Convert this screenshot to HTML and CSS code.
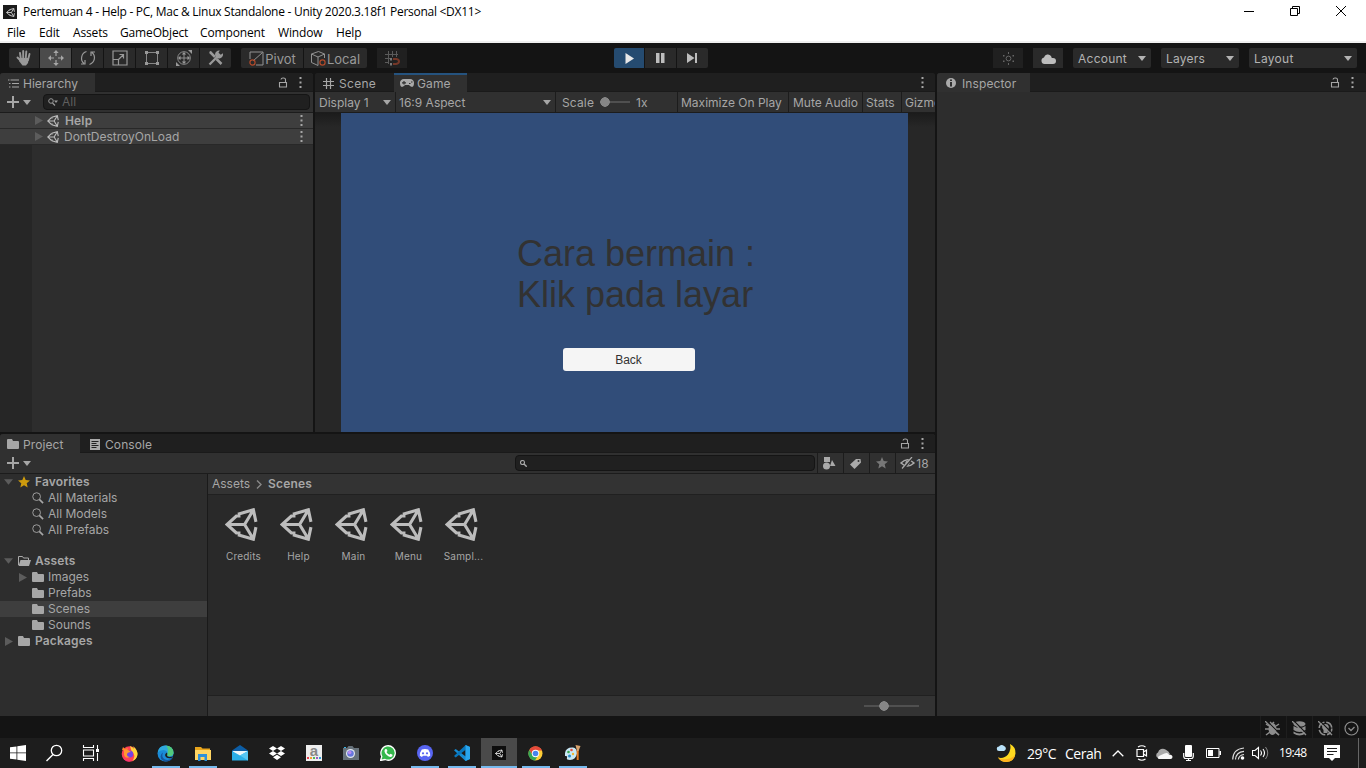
FILE: index.html
```html
<!DOCTYPE html>
<html lang="en">
<head>
<meta charset="utf-8">
<title>Pertemuan 4 - Help - Unity</title>
<link rel="stylesheet" href="styles.css">
</head>
<body>
<svg class="defs" width="0" height="0">
  <symbol id="unity" viewBox="0 0 32 32"><path d="M15 7.800H11L2 16 11 24.200h4M12.500 6L27.500 1.700 30 13.500M12.500 26l15 4.300L30 18.500M2 16h17M27.500 2L19 16l8.500 14" fill="none" stroke="currentColor" stroke-width="3"/></symbol>
  <symbol id="lock" viewBox="0 0 10 11"><path d="M1.500 5.500h7v4.500h-7zM7.500 5V2.5Q7.500 1 5.500 1H5Q3.200 1 3 2.500" fill="none" stroke="currentColor" stroke-width="1.1"/></symbol>
  <symbol id="dots" viewBox="0 0 3 11"><path d="M.5 0h2v2h-2zM.5 4.500h2v2h-2zM.5 9h2v2h-2z" fill="currentColor"/></symbol>
  <symbol id="down" viewBox="0 0 8 5"><path d="M0 0h8L4 5z" fill="currentColor"/></symbol>
  <symbol id="right" viewBox="0 0 8 9"><path d="M0 0v9l8-4.500z" fill="currentColor"/></symbol>
  <symbol id="folder" viewBox="0 0 12 10"><path d="M0 1Q0 0 1 0h4l1 2h5q1 0 1 1v6q0 1-1 1H1q-1 0-1-1z" fill="currentColor"/></symbol>
  <symbol id="search" viewBox="0 0 13 13"><circle cx="5" cy="5" r="4.200" fill="none" stroke="currentColor"/><path d="M8 8l4 4" stroke="currentColor" stroke-width="1.800"/></symbol>
  <symbol id="star" viewBox="0 0 12 12"><path d="M6 0l1.700 4.100 4.300.3-3.300 2.900 1 4.300L6 9.300l-3.700 2.300 1-4.300L0 4.400l4.300-.3z" fill="currentColor"/></symbol>
  <symbol id="plus" viewBox="0 0 12 12"><path d="M6 0v12M0 6h12" stroke="currentColor" stroke-width="2"/></symbol>
</svg>

<header class="titlebar">
  <span class="app-icon"><svg width="9" height="9"><use href="#unity"/></svg></span>
  <span class="title">Pertemuan 4 - Help - PC, Mac &amp; Linux Standalone - Unity 2020.3.18f1 Personal &lt;DX11&gt;</span>
  <div class="window-controls">
    <svg width="10" height="12" viewBox="0 0 10 12"><path d="M0 6.500h10" stroke="#000"/></svg>
    <svg width="10" height="10" viewBox="0 0 10 10"><path d="M.5 2.500h7v7h-7zM2.500 2V.500h7v7H8" fill="none" stroke="#000"/></svg>
    <svg width="10" height="10" viewBox="0 0 10 10"><path d="M0 0l10 10M10 0L0 10" stroke="#000"/></svg>
  </div>
</header>
<nav class="menubar"><span class="m-file">File</span><span class="m-edit">Edit</span><span class="m-assets">Assets</span><span class="m-go">GameObject</span><span class="m-comp">Component</span><span class="m-win">Window</span><span>Help</span></nav>

<div class="toolbar">
  <div class="group tools">
    <button><svg width="16" height="16" viewBox="0 0 16 16"><path d="M5 10L4 3M7.200 9V1M9.700 9l.6-7.500M12 10l1.500-6M5 11L1.500 7.500" stroke="#999" stroke-width="1.900" stroke-linecap="round"/><path d="M4 8h9l-1 5-2 2.500H6.500L3 11z" fill="#999"/></svg></button>
    <button class="selected"><svg width="16" height="16" viewBox="0 0 16 16"><path d="M8 1.500V6M8 10v4.500M1.500 8H6M10 8h4.500" stroke="#a6a6a6" stroke-width="1.200"/><path d="M8 0l2.700 3H5.300zM8 16l2.700-3H5.300zM0 8l3-2.700v5.400zM16 8l-3-2.700v5.400z" fill="#a6a6a6"/></svg></button>
    <button><svg width="16" height="16" viewBox="0 0 16 16"><path d="M6.500 1.500A7 7 0 0 0 4 13.500M1 14h4v-4M9.500 14.500A7 7 0 0 0 12 2.500M15 2h-4v4" fill="none" stroke="#999" stroke-width="1.200"/></svg></button>
    <button><svg width="16" height="16" viewBox="0 0 16 16"><path d="M1 1h14v14H1zM1.500 9.500h5v5M6 10l5.500-5.500M7.500 4.500h4v4" fill="none" stroke="#999" stroke-width="1.200"/></svg></button>
    <button><svg width="16" height="16" viewBox="0 0 16 16"><path d="M4 2.500h8M4 13.500h8M2.500 4v8M13.500 4v8" stroke="#888"/><path d="M1 1h3v3H1zM12 1h3v3h-3zM1 12h3v3H1zM12 12h3v3h-3z" fill="#999"/></svg></button>
    <button><svg width="16" height="16" viewBox="0 0 16 16"><g fill="none" stroke="#8d8d8d"><circle cx="8" cy="8" r="6.300"/><path d="M8 3v10M3 8h10"/></g><path d="M8 2l2.200 2.500H5.800zM8 14l2.200-2.500H5.800zM2 8l2.500-2.200v4.400zM14 8l-2.500-2.200v4.400zM12 0h4v4zM0 12v4h4z" fill="#999"/></svg></button>
    <button><svg width="16" height="16" viewBox="0 0 16 16"><path d="M2 2l5 5M8.500 9l5 5" stroke="#999" stroke-width="2.500"/><path d="M1.500 14.500l8-8" stroke="#999" stroke-width="2.300"/><path d="M14.800 3.200a4 4 0 1 1-3-2.600L10.500 2.800l2.300 2z" fill="#999"/><path d="M1 2l2-1 1 3zM1 13l2.500 2" fill="#999"/></svg></button>
  </div>
  <div class="group handles">
    <button class="wide"><svg width="15" height="15" viewBox="0 0 15 15"><path d="M1 8V1h13v13H7M4 10L13.500 1.500" fill="none" stroke="#929292"/><circle cx="3.500" cy="11.500" r="2.600" fill="none" stroke="#b34a2a" stroke-width="1.200"/></svg><span class="t-pivot">Pivot</span></button>
    <button class="wide"><svg width="15" height="15" viewBox="0 0 15 15"><path d="M7.500.500l6 2.500v4M7 14.500L.5 11.500V3l7-2.500M.5 3L7 6l6.500-3M7 6v8.500" fill="none" stroke="#929292"/><circle cx="11.500" cy="11.500" r="2.600" fill="none" stroke="#b34a2a" stroke-width="1.200"/></svg><span class="t-local">Local</span></button>
  </div>
  <button class="snap"><svg width="15" height="15" viewBox="0 0 15 15"><path d="M0 3.500h13M0 7.500h6M0 11.500h4M3.500 0v13M7.500 0v6M11.500 0v6" stroke="#5b5b5b"/><path d="M8 8h3.500Q14 8.500 14 10.500T11 13H8" fill="none" stroke="#743727" stroke-width="2"/><path d="M6 7v2.500M6 12v2.500" stroke="#777" stroke-width="2"/></svg></button>
  <div class="group play">
    <button class="active"><svg width="9" height="11" viewBox="0 0 9 11"><path d="M.5 0v11L9 5.500z" fill="#e8e8e8"/></svg></button>
    <button><svg width="9" height="10" viewBox="0 0 9 10"><path d="M0 0h3.500v10H0zM5 0h3.500v10H5z" fill="#bdbdbd"/></svg></button>
    <button><svg width="11" height="10" viewBox="0 0 11 10"><path d="M0 0l7.500 5L0 10zM8 0h2v10H8z" fill="#bdbdbd"/></svg></button>
  </div>
  <button class="lightgen"><svg width="13" height="13" viewBox="0 0 13 13"><circle cx="6.500" cy="6.500" r="2.400" fill="none" stroke="#666"/><path d="M6 0h1v2H6zM6 11h1v2H6zM1 3h1.500v1.500H1zM10.500 3H12v1.500h-1.500zM1 8.500h1.500V10H1zM10.500 8.500H12V10h-1.500z" fill="#666"/></svg></button>
  <button class="cloud"><svg width="15" height="11" viewBox="0 0 15 11"><path d="M3.500 11A3.300 3.300 0 0 1 3 4.500 4 4 0 0 1 10 3l.8 2H12a3 3 0 0 1 0 6z" fill="#bdbdbd"/></svg></button>
  <button class="drop account"><span class="t-account">Account</span><svg width="8" height="5"><use href="#down"/></svg></button>
  <button class="drop layers"><span>Layers</span><svg width="8" height="5"><use href="#down"/></svg></button>
  <button class="drop layout"><span class="t-layout">Layout</span><svg width="8" height="5"><use href="#down"/></svg></button>
</div>

<main class="editor">
  <div class="left">
    <div class="upper">
      <section class="panel hierarchy">
        <div class="tabs">
          <div class="tab tab-hier"><svg width="11" height="9" viewBox="0 0 11 9"><path d="M2.500 1H11M4 4.500h7M4 8h7M0 1h1.500M1 4.500h1.500M1 8h1.500" stroke="currentColor" stroke-width="1.100"/></svg><span class="t-hier">Hierarchy</span></div>
          <div class="tab-actions"><svg width="10" height="11"><use href="#lock"/></svg><svg width="3" height="11"><use href="#dots"/></svg></div>
        </div>
        <div class="strip">
          <div class="add"><svg width="12" height="12"><use href="#plus"/></svg><svg width="8" height="5"><use href="#down"/></svg></div>
          <div class="search-field hier-search"><svg width="10" height="8" viewBox="0 0 10 8"><circle cx="3" cy="3" r="2.300" fill="none" stroke="#999"/><path d="M4.500 5L7 7.500" stroke="#999" stroke-width="1.300"/><path d="M6 2.500h4L8 5z" fill="#999"/></svg><span>All</span></div>
        </div>
        <div class="tree-row"><svg class="arrow" width="8" height="9"><use href="#right"/></svg><svg class="scene-icon" width="12" height="12"><use href="#unity"/></svg><b>Help</b><svg class="more" width="3" height="11"><use href="#dots"/></svg></div>
        <div class="tree-row"><svg class="arrow" width="8" height="9"><use href="#right"/></svg><svg class="scene-icon" width="12" height="12"><use href="#unity"/></svg><span class="t-ddol">DontDestroyOnLoad</span><svg class="more" width="3" height="11"><use href="#dots"/></svg></div>
        <div class="hier-body"></div>
      </section>

      <section class="panel game">
        <div class="tabs">
          <div class="tab tab-scene"><svg width="11" height="11" viewBox="0 0 11 11"><path d="M3.500 0v11M7.500 0v11M0 3.500h11M0 7.500h11" stroke="currentColor" stroke-width="1.200"/></svg><span>Scene</span></div>
          <div class="tab tab-game"><svg width="14" height="8" viewBox="0 0 14 8"><path d="M3.800 0h6.400A3.800 3.800 0 0 1 14 4c0 5-3 4.500-5 2H5C3 8.500 0 9 0 4A3.800 3.800 0 0 1 3.800 0z" fill="#aaa"/><path d="M2 3.800h4M4 2v3.600M9 4.500h1.500M11 3h1.500" stroke="#303030" stroke-width="1.200"/></svg><span>Game</span></div>
          <div class="tab-actions"><svg width="3" height="11"><use href="#dots"/></svg></div>
        </div>
        <div class="strip game-strip">
          <div class="cell display"><span>Display 1</span><svg width="8" height="5"><use href="#down"/></svg></div>
          <div class="cell aspect"><span>16:9 Aspect</span><svg width="8" height="5"><use href="#down"/></svg></div>
          <div class="cell scale"><span>Scale</span><i class="slider"></i><span>1x</span></div>
          <div class="cell maximize"><span>Maximize On Play</span></div>
          <div class="cell mute"><span>Mute Audio</span></div>
          <div class="cell stats"><span>Stats</span></div>
          <div class="cell gizmos"><span>Gizmos</span></div>
        </div>
        <div class="viewport">
          <div class="screen">
            <p class="help-text">Cara bermain :<br>Klik pada layar</p>
            <div class="back">Back</div>
          </div>
        </div>
      </section>
    </div>

    <section class="panel project">
      <div class="tabs">
        <div class="tab tab-project"><svg width="12" height="10"><use href="#folder"/></svg><span>Project</span></div>
        <div class="tab tab-console"><svg width="10" height="11" viewBox="0 0 10 11"><path d="M0 0h10v11H0z" fill="#aaa"/><path d="M1.500 2.500h7M1.500 4.500h5M1.500 6.500h7M1.500 8.500h5" stroke="#222"/></svg><span>Console</span></div>
        <div class="tab-actions"><svg width="10" height="11"><use href="#lock"/></svg><svg width="3" height="11"><use href="#dots"/></svg></div>
      </div>
      <div class="strip">
        <div class="add"><svg width="12" height="12"><use href="#plus"/></svg><svg width="8" height="5"><use href="#down"/></svg></div>
        <div class="search-field proj-search"><svg width="7" height="7" viewBox="0 0 7 7"><circle cx="2.500" cy="2.500" r="2" fill="none" stroke="currentColor" stroke-width="1.100"/><path d="M4 4l2.700 2.700" stroke="currentColor" stroke-width="1.400"/></svg></div>
        <div class="filters">
          <div class="cell"><svg width="13" height="13" viewBox="0 0 13 13"><path d="M1 0h6v5H1zM9 3l3.500 6H7z" fill="#aaa"/><circle cx="3.500" cy="9" r="3.500" fill="#aaa"/></svg></div>
          <div class="cell"><svg width="11" height="11" viewBox="0 0 11 11"><path d="M6 1h4.500L11 4.500 4.500 11 0 6.500z" fill="#aaa"/><circle cx="8.500" cy="3" r="1" fill="#333"/></svg></div>
          <div class="cell dim"><svg width="12" height="12"><use href="#star"/></svg></div>
          <div class="cell hidden-count"><svg width="15" height="12" viewBox="0 0 15 12"><path d="M1 6Q7.500-.5 14 6 7.500 12 1 6z" fill="none" stroke="#aaa" stroke-width="1.500"/><circle cx="7.500" cy="6" r="2.200" fill="#aaa"/><path d="M3 12L13 0" stroke="#303030" stroke-width="2"/><path d="M2 11.500L12 0" stroke="#aaa" stroke-width="1.200"/></svg><span>18</span></div>
        </div>
      </div>
      <div class="project-body">
        <div class="folders">
          <div class="f-row favorites"><svg class="arrow" width="9" height="8"><use href="#down"/></svg><svg class="fav" width="12" height="12"><use href="#star"/></svg><b class="t-fav">Favorites</b></div>
          <div class="f-row nested"><svg width="12" height="12"><use href="#search"/></svg><span>All Materials</span></div>
          <div class="f-row nested"><svg width="12" height="12"><use href="#search"/></svg><span>All Models</span></div>
          <div class="f-row nested"><svg width="12" height="12"><use href="#search"/></svg><span>All Prefabs</span></div>
          <div class="f-row assets-root"><svg class="arrow" width="9" height="8"><use href="#down"/></svg><svg width="13" height="10" viewBox="0 0 13 10"><path d="M.5 9V.500h4l1 1.500h5v2" fill="none" stroke="#aaa"/><path d="M2.500 4H13l-2 6H.500z" fill="#aaa"/></svg><b>Assets</b></div>
          <div class="f-row images"><svg class="arrow" width="8" height="9"><use href="#right"/></svg><svg width="12" height="10"><use href="#folder"/></svg><span>Images</span></div>
          <div class="f-row nested"><svg width="12" height="10"><use href="#folder"/></svg><span>Prefabs</span></div>
          <div class="f-row nested current"><svg width="12" height="10"><use href="#folder"/></svg><span>Scenes</span></div>
          <div class="f-row nested"><svg width="12" height="10"><use href="#folder"/></svg><span>Sounds</span></div>
          <div class="f-row"><svg class="arrow" width="8" height="9"><use href="#right"/></svg><svg class="pkg" width="12" height="10"><use href="#folder"/></svg><b>Packages</b></div>
        </div>
        <div class="browser">
          <div class="crumbs"><span>Assets</span><svg width="6" height="9" viewBox="0 0 6 9"><path d="M1 .5l4 4-4 4" fill="none" stroke="#888" stroke-width="1.400"/></svg><b>Scenes</b></div>
          <div class="grid">
            <div class="asset"><svg width="33" height="33"><use href="#unity"/></svg><span>Credits</span></div>
            <div class="asset"><svg width="33" height="33"><use href="#unity"/></svg><span>Help</span></div>
            <div class="asset"><svg width="33" height="33"><use href="#unity"/></svg><span>Main</span></div>
            <div class="asset"><svg width="33" height="33"><use href="#unity"/></svg><span>Menu</span></div>
            <div class="asset"><svg width="33" height="33"><use href="#unity"/></svg><span>Sampl...</span></div>
          </div>
          <div class="browser-foot"><i class="slider zoom"></i></div>
        </div>
      </div>
    </section>
  </div>

  <section class="panel inspector">
    <div class="tabs">
      <div class="tab tab-insp"><svg width="10" height="10" viewBox="0 0 10 10"><circle cx="5" cy="5" r="5" fill="#aaa"/><path d="M4 1.500h2V3H4zM4 4h2v4.500H4z" fill="#303030"/></svg><span>Inspector</span></div>
      <div class="tab-actions"><svg width="10" height="11"><use href="#lock"/></svg><svg width="3" height="11"><use href="#dots"/></svg></div>
    </div>
  </section>
</main>

<div class="statusbar">
  <span><svg width="15" height="15" viewBox="0 0 15 15"><ellipse cx="7.500" cy="8" rx="4" ry="6" fill="#8d8d8d"/><path d="M1 3l3 2M14 3l-3 2M0 8h15M1 14l4-3M14 14l-4-3M5 1l2 2 2-2" fill="none" stroke="#8d8d8d" stroke-width="1.500"/><path d="M2 0l13 13" stroke="#151515" stroke-width="1.200"/><path d="M0 0l14 14" stroke="#8d8d8d" stroke-width="1.300"/></svg></span>
  <span><svg width="15" height="15" viewBox="0 0 15 15"><ellipse cx="7.500" cy="3" rx="6" ry="2.800" fill="#8d8d8d"/><path d="M1.500 5q6 4 12 0v4q-6 4-12 0zM1.500 10.500q6 4 12 0V12.500q-6 4-12 0z" fill="#8d8d8d"/><path d="M2 0l13 13" stroke="#151515" stroke-width="1.200"/><path d="M0 0l14 14" stroke="#8d8d8d" stroke-width="1.300"/></svg></span>
  <span><svg width="15" height="15" viewBox="0 0 15 15"><circle cx="7.500" cy="7.500" r="6.300" fill="none" stroke="#8d8d8d" stroke-width="1.600" stroke-dasharray="8 1.900"/><path d="M7.500 3a3.300 3.300 0 0 1 2 6v3h-4V9a3.300 3.300 0 0 1 2-6z" fill="#8d8d8d"/><path d="M2 0l13 13" stroke="#151515" stroke-width="1.200"/><path d="M0 0l14 14" stroke="#8d8d8d" stroke-width="1.300"/></svg></span>
  <span><svg width="15" height="15" viewBox="0 0 15 15"><circle cx="7.500" cy="7.500" r="6.500" fill="none" stroke="#8d8d8d" stroke-width="1.200"/><path d="M4.500 7l2.500 2.500 3.500-3.500" fill="none" stroke="#8d8d8d" stroke-width="1.300"/></svg></span>
</div>

<footer class="taskbar">
  <div class="apps">
    <span><svg width="16" height="16" viewBox="0 0 16 16"><path d="M0 2.300l6.500-.9v6.100H0zM7.300 1.300L16 0v7.500H7.300zM0 8.300h6.500v6.200L0 13.700zM7.300 8.300H16V16l-8.700-1.200z" fill="#fff"/></svg></span>
    <span class="find"><svg width="18" height="18" viewBox="0 0 18 18"><circle cx="11.500" cy="6.500" r="5.200" fill="none" stroke="#fff" stroke-width="1.300"/><path d="M8 10.500L1.500 17" stroke="#fff" stroke-width="1.400"/></svg></span>
    <span class="taskview"><svg width="17" height="16" viewBox="0 0 17 16"><path d="M1.500 0v2.500h10V0M1.500 5v6h10V5zM1.500 16v-2.500h10V16M15.500 0v4M15.500 8v8" fill="none" stroke="#fff" stroke-width="1.100"/><path d="M14 4h3v3h-3z" fill="#fff"/></svg></span>
    <span><svg width="17" height="17" viewBox="0 0 17 17"><circle cx="8.500" cy="9" r="7.800" fill="#ff4055"/><path d="M9 1Q12 2 12.500 4 13 2 12 1q5 4 4.500 9-1 4.500-5 6 4-6-1-10z" fill="#ffd43b"/><path d="M1 5l1-3 2 2 3-1-1 3z" fill="#ff8a2a"/><path d="M1.500 11Q4 17 12 15q-5 3-9-.5z" fill="#f72e7a"/><circle cx="8.600" cy="9" r="3.600" fill="#7542e5"/><path d="M3 5h4l3 2q-4 0-4 2.500 0 2 3 2.500-5 2-6-2z" fill="#ff982f"/></svg></span>
    <span class="open"><svg width="17" height="17" viewBox="0 0 17 17"><circle cx="8.500" cy="8.500" r="8" fill="#1a8bd8"/><path d="M.6 7.500Q2 .5 8.500.5q7.500.5 8 7 0 3.500-4 3.700-3.500 0-2-2.700Q10.500 5.500 6.500 5 2.500 5 .6 7.500z" fill="#2fa9dc"/><path d="M9 .5q7 .7 7.500 7 0 3.500-4 3.700-3.500 0-2-2.500Q12 4 9 .5z" fill="#52ca7c"/><path d="M6 7.500q-2 5 2 7 4 1.500 8-2-2 3.500-6 4-6 0-6.500-5Q4 8.500 6 7.500z" fill="#15559f"/><path d="M10.300 9q-1 3 2.500 3 2 0 3.700-1.200L14.500 13Q9 14 8 10q.5-2 2-2.500z" fill="#1d1d1d"/></svg></span>
    <span class="open"><svg width="17" height="15" viewBox="0 0 17 15"><path d="M1 1h6l1.500 1.500H16V14H1z" fill="#e9a51c"/><path d="M1 4h16v10H1z" fill="#ffd563"/><path d="M4 15V8h9v7h-2.500v-4h-4v4z" fill="#2e90d9"/></svg></span>
    <span><svg width="16" height="16" viewBox="0 0 16 16"><path d="M0 5.500L8 0l8 5.500V15H0z" fill="#0c5da5"/><path d="M1 6h14v5H1z" fill="#edf6fb"/><path d="M0 6l8 4.500L16 6v9.500H0z" fill="#29aee9"/><path d="M8 10.500L16 6v9.500z" fill="#56c6f4"/></svg></span>
    <span><svg width="16" height="14" viewBox="0 0 16 14"><path d="M4 0l4 2.500L4 5 0 2.500zM12 0l4 2.500L12 5 8 2.500zM4 5l4 2.500L4 10 0 7.500zM12 5l4 2.500-4 2.500-4-2.500zM8 8.800l4 2.500L8 14l-4-2.700z" fill="#fff"/></svg></span>
    <span><i class="a-tile"><b>a</b><svg width="14" height="2" viewBox="0 0 14 2"><path d="M0 0h2v2H0z" fill="#e83f4d"/><path d="M3 0h2v2H3z" fill="#f7a331"/><path d="M6 0h2v2H6z" fill="#50b85c"/><path d="M9 0h2v2H9z" fill="#a05ac2"/><path d="M12 0h2v2h-2z" fill="#2d9fda"/></svg></i></span>
    <span class="camera"><svg width="17" height="14" viewBox="0 0 17 14"><path d="M1 2h4l1.500-2h4L12 2h5v12H1z" fill="#66717a"/><path d="M2 1h2v1H2z" fill="#36b4e6"/><circle cx="8.500" cy="7.500" r="4.500" fill="#e4e9ef"/><circle cx="8.500" cy="7.500" r="3.300" fill="#6577dd"/><circle cx="7.700" cy="6.500" r="1.800" fill="#b98af0"/></svg></span>
    <span><svg width="16" height="16" viewBox="0 0 16 16"><path d="M.5 15.500l1.300-4A7.200 7.200 0 1 1 5 14.500z" fill="#35b84c" stroke="#fff" stroke-width="1.300"/><path d="M5 4.300l1.500-.2 1 2-1 1q1 2 3 2.700l1-1 2 1-.2 1.400Q10 13 7 10.300 3.300 7 5 4.300z" fill="#fff"/></svg></span>
    <span class="open"><svg width="16" height="16" viewBox="0 0 16 16"><circle cx="8" cy="8" r="8" fill="#5865f2"/><path d="M4.800 4.500Q8 3.300 11.200 4.500q2.200 3 2 6.300l-2.300 1.200-.8-1.300H5.900L5 12l-2.200-1.200q-.2-3.300 2-6.300z" fill="#fff"/><circle cx="6" cy="8.300" r="1.100" fill="#5865f2"/><circle cx="10" cy="8.300" r="1.100" fill="#5865f2"/></svg></span>
    <span class="open"><svg width="16" height="16" viewBox="0 0 16 16"><path d="M11.500 0L16 2v12l-4.500 2L0 5.300 1.700 4l10 7.500z" fill="#168bd2"/><path d="M11.700 0v4.700L1.700 12.500 0 11z" fill="#0876bd"/><path d="M11.500 0L16 2v12l-4.500 2z" fill="#28a5ed"/></svg></span>
    <span class="focused"><i class="unity-tile"><svg width="8" height="9"><use href="#unity"/></svg></i></span>
    <span class="open"><svg width="15" height="15" viewBox="0 0 15 15"><circle cx="7.500" cy="7.500" r="7" fill="#ffce36"/><path d="M1.300 4A7 7 0 0 1 14 4.500H7.500L5 10z" fill="#e6493a"/><path d="M1.300 4A7 7 0 0 0 7 14.500L10.300 9l-5.500.5z" fill="#35a756"/><circle cx="7.500" cy="7.500" r="3.700" fill="#fff"/><circle cx="7.500" cy="7.500" r="2.800" fill="#4784ed"/></svg></span>
    <span class="open"><svg width="17" height="16" viewBox="0 0 17 16"><path d="M1 8Q2 2 9 2.500q4 .5 4 6-1 6-7 6.500-4 0-3-2.500Q4 10.500 1 11z" fill="#c9e8f5"/><circle cx="4.500" cy="7" r="1.300" fill="#37a852"/><circle cx="7.500" cy="5" r="1.300" fill="#e54d3b"/><circle cx="5.500" cy="11" r="1.500" fill="#278bc9"/><circle cx="9" cy="9" r="1.200" fill="#f2b632"/><path d="M13.700 5v10" stroke="#e37a25" stroke-width="2"/><path d="M11.500 0l5 1-2 5H13z" fill="#d9a26c"/></svg></span>
  </div>
  <div class="tray">
    <svg class="moon" width="21" height="20" viewBox="0 0 21 20"><path d="M14 1q6 3 5.500 9.500-1 8-9 8.500-5.500 0-8.500-4.500 6 1.500 10-3Q15.500 6.500 14 1z" fill="#ffd91f"/><path d="M2 14.500q8 4.500 17-2-2 6-8.500 6.500-5.500 0-8.500-4.500z" fill="#ffb21f"/><path d="M3 8a2 2 0 0 1 0-4.500 3 3 0 0 1 5-.5A2.600 2.600 0 0 1 8 8z" fill="#b9e2fa"/></svg>
    <span class="temp">29°C</span><span class="cerah">Cerah</span>
    <svg class="chev" width="12" height="7" viewBox="0 0 12 7"><path d="M.7 6.300L6 1l5.300 5.300" fill="none" stroke="#fff" stroke-width="1.300"/></svg>
    <svg class="meet" width="12" height="16" viewBox="0 0 12 16"><path d="M1 4.500h6.500v7H1zM7.500 7l3-2v6l-3-2M2 2Q6-.500 9.500 2M2 14q4 2.500 7.500 0" fill="none" stroke="#fff" stroke-width="1.200"/></svg>
    <svg class="drive" width="17" height="11" viewBox="0 0 17 11"><path d="M2 10A3 3 0 0 1 2 4.500 5 5 0 0 1 9.500 1.500Q13 3 14 6z" fill="#aaa"/><path d="M2.500 11Q.8 9 4 7.500l4.500-2q3-1.500 4.500 1 3.500 0 3.500 2.500 0 2-2 2z" fill="#f7f7f7"/></svg>
    <svg class="mic" width="11" height="16" viewBox="0 0 11 16"><rect x="2" width="7" height="12" rx="1" fill="#fff"/><path d="M.7 8v3q0 2.500 2 2.500h5.600q2 0 2-2.500V8M5.500 13v3M3 15.500h5" fill="none" stroke="#fff" stroke-width="1.200"/></svg>
    <svg class="battery" width="15" height="10" viewBox="0 0 15 10"><path d="M.5 .5h12.500v9H.500z" fill="none" stroke="#fff"/><path d="M2 2h5v6H2zM13.500 3H15v4h-1.500z" fill="#fff"/></svg>
    <svg class="wifi" width="13" height="13" viewBox="0 0 13 13"><path d="M.7 12.500Q1 2 12 1M3.500 12.500Q4 5 12 4.300M6.300 12.500Q7 8 12 7.500" fill="none" stroke="#ddd" stroke-width="1.200"/><circle cx="10.500" cy="11" r="1.800" fill="#fff"/></svg>
    <svg class="sound" width="17" height="14" viewBox="0 0 17 14"><path d="M.5 4.500H3L6.500 1.500v11L3 9.500H.500zM8.500 4.500q2 2.500 0 5M11 3q3 4 0 8" fill="none" stroke="#fff" stroke-width="1.100"/><path d="M13.500 1q4.500 6 0 12" fill="none" stroke="#888"/></svg>
    <span class="time">19:48</span>
    <svg class="notif" width="16" height="16" viewBox="0 0 16 16"><path d="M0 0h16v13h-5l-3 3-3-3H0z" fill="#fff"/><path d="M3 3.500h10M3 6.500h10M3 9.500h6.500" stroke="#1d1d1d"/></svg>
    <i class="desktop-edge"></i>
  </div>
</footer>
</body>
</html>
```
FILE: styles.css
```css
* { box-sizing: border-box; }
html, body { margin: 0; width: 1366px; height: 768px; overflow: hidden; }
body { background: #141414; color: #a6a6a6; font: 12px/16px Inter, "Liberation Sans", sans-serif; letter-spacing: 0; display: flex; flex-direction: column; white-space: nowrap; }
svg { flex: none; display: block; }
.defs { position: absolute; }
button { font: inherit; letter-spacing: inherit; color: #b3b3b3; border: 0; padding: 0; background: #2a2a2a; display: flex; align-items: center; justify-content: center; height: 20px; }
b { font-weight: 600; letter-spacing: .15px; }

.titlebar { height: 24px; background: #fff; color: #000; display: flex; align-items: center; padding-left: 3px; font: 12px/16px "Open Sans", sans-serif; letter-spacing: -.27px; }
.app-icon { width: 14px; height: 14px; background: #1b1b1b; color: #ddd; display: grid; place-items: center; margin-right: 6px; }
.window-controls { margin-left: auto; display: flex; align-items: center; gap: 36px; padding: 0 20px 3px 0; }
.menubar { height: 19px; background: #fff; border-bottom: 2px solid #f0f0f0; color: #000; display: flex; padding-left: 7px; font: 12px/18px "Open Sans", sans-serif; letter-spacing: -.15px; }
.m-file { width: 32px; } .m-edit { width: 34px; } .m-assets { width: 47px; } .m-go { width: 80px; } .m-comp { width: 78px; } .m-win { width: 58px; }

.toolbar { height: 30px; display: flex; align-items: flex-start; padding: 5px 9px 0; background: #141414; font-size: 13px; letter-spacing: 0; }
.toolbar span { padding-top: 1px; }
.group { display: flex; gap: 1px; }
.group button { width: 31px; }
.group button:first-child { border-radius: 2px 0 0 2px; }
.group button:last-child { border-radius: 0 2px 2px 0; }
.tools button:first-child, .play button:first-child { width: 30px; }
.group .selected { background: #4b4b4b; }
.group .active { background: #254b70; }
.handles { margin-left: 10px; }
.group .wide { width: 62px; gap: 1px; color: #999; padding-left: 1px; }
.group .wide + .wide { width: 63px; padding-left: 0; }
.snap { width: 30px; margin-left: 10px; background: #202020; }
.play { margin-left: 207px; }
.lightgen { width: 30px; margin-left: 285px; background: #202020; }
.cloud { width: 30px; margin-left: 10px; }
.drop { width: 78px; margin-left: 10px; padding: 0 5px; justify-content: space-between; border-radius: 2px; font-size: 12px; letter-spacing: .25px; }
.layout { width: 108px; }

.editor { height: 643px; display: flex; gap: 2px; }
.left { width: 935px; display: flex; flex-direction: column; gap: 2px; }
.upper { height: 359px; display: flex; gap: 2px; }
.panel { display: flex; flex-direction: column; background: #2d2d2d; overflow: hidden; border-radius: 3px 3px 0 0; }
.hierarchy { width: 313px; }
.game { width: 620px; background: #242424; }
.project { height: 282px; }
.inspector { width: 429px; }
.tabs { height: 19px; flex: none; background: #1f1f1f; border-bottom: 1px solid #1a1a1a; display: flex; font-size: 12px; letter-spacing: .1px; }
.tab { height: 19px; display: flex; align-items: center; padding: 2px 0 0 8px; gap: 4px; line-height: 15px; }
.tab > svg { margin-top: -1px; }
.tab-hier { width: 95px; background: #303030; }
.tab-hier span { letter-spacing: 0; }
.tab-scene { width: 79px; gap: 5px; letter-spacing: .3px; }
.tab-game { width: 73px; background: #303030; border-top: 2px solid #25537f; padding: 0 0 0 6px; gap: 3px; }
.tab-project { width: 80px; background: #303030; padding-left: 7px; }
.tab-console { padding-left: 10px; gap: 5px; }
.tab-insp { width: 93px; background: #303030; padding-left: 9px; gap: 6px; }
.tab-actions { margin-left: auto; display: flex; gap: 11px; align-items: center; padding-right: 11px; }
.inspector .tab-actions { padding-right: 12px; }
.strip { height: 21px; flex: none; background: #303030; border-bottom: 1px solid #1c1c1c; display: flex; align-items: center; }
.add { display: flex; align-items: center; gap: 4px; padding-left: 7px; }
.search-field { height: 16px; background: #202020; border: 1px solid #151515; border-radius: 4px; display: flex; align-items: center; color: #5f5f5f; }
.hier-search { width: 267px; margin-left: 12px; padding-left: 4px; gap: 4px; }
.tree-row { height: 16px; flex: none; background: #3e3e3e; border-bottom: 1px solid #282828; display: flex; align-items: center; padding: 0 10px 0 35px; }
.tree-row b { margin-left: 6px; }
.tree-row span { margin-left: 5px; }
.arrow { color: #5c5c5c; }
.scene-icon { margin-left: 4px; color: #bbb; }
.more { margin-left: auto; }
.hier-body { flex: 1; background: linear-gradient(90deg, #262626 32px, #2d2d2d 32px); }

.game-strip .cell { height: 20px; border-right: 1px solid #1c1c1c; display: flex; align-items: center; padding-left: 4px; flex: none; }
.strip .cell span { padding-top: 1px; }
.cell.display, .cell.aspect { justify-content: space-between; padding-right: 4px; }
.display { width: 81px; }
.game-strip .aspect { width: 160px; padding-left: 3px; }
.game-strip .scale { width: 122px; padding-left: 6px; gap: 6px; letter-spacing: .15px; }
.slider { display: block; width: 30px; height: 10px; background: radial-gradient(circle at 5px 5px, #868686 4.500px, transparent 5px), linear-gradient(#505050, #505050) 0 4px / 100% 2px no-repeat; }
.game-strip .maximize { width: 111px; padding-left: 3px; }
.mute { width: 74px; }
.game-strip .stats { width: 39px; padding-left: 3px; }
.game-strip .gizmos { border: 0; padding-left: 3px; }
.viewport { flex: 1; padding: 0 27px 0 26px; background: linear-gradient(#1b1b1b, #272727 14px); }
.screen { height: 100%; background: #314d79; overflow: hidden; }
.help-text { margin: 120px 0 0 176px; color: #323232; font: 36px/41.400px "Liberation Sans", sans-serif; letter-spacing: 0; }
.back { width: 132px; height: 23px; margin: 32px 0 0 221.500px; background: #f5f5f5; border-radius: 3px; color: #323232; font: 12px/24px "Liberation Sans", sans-serif; letter-spacing: 0; text-align: center; }

.proj-search { width: 300px; margin-left: 484px; padding-left: 4px; color: #aaa; }
.filters { display: flex; margin-left: 2px; }
.filters .cell { width: 26px; height: 20px; border-left: 1px solid #1c1c1c; display: flex; align-items: center; justify-content: center; padding-right: 2px; }
.filters .dim { color: #777; }
.filters .hidden-count { width: 40px; gap: 1px; letter-spacing: .2px; }
.project-body { flex: 1; display: flex; }
.folders { width: 208px; border-right: 1px solid #1a1a1a; }
.f-row { height: 16px; display: flex; align-items: center; padding-left: 5px; gap: 5px; }
.f-row .fav { color: #cc9a0d; }
.f-row.favorites { padding-left: 4px; }
.f-row.nested { padding-left: 32px; gap: 4px; }
.f-row.assets-root { margin-top: 15px; padding-left: 4px; }
.f-row.assets-root b { margin-left: -1px; }
.f-row.images { padding-left: 19px; gap: 4px; }
.images .arrow { margin-right: 1px; }
.current { background: #3e3e3e; }
.browser { flex: 1; display: flex; flex-direction: column; background: #292929; }
.crumbs { height: 21px; background: #333; border-bottom: 1px solid #202020; display: flex; align-items: center; padding-left: 4px; gap: 6px; }
.grid { flex: 1; display: flex; padding: 13px 0 0 8px; }
.asset { width: 55px; display: flex; flex-direction: column; align-items: center; font-size: 10px; line-height: 14px; letter-spacing: .2px; }
.asset svg { color: #bdbdbd; margin: 0 4px 8px 0; }
.browser-foot { height: 21px; background: #333; border-top: 1px solid #202020; display: flex; align-items: center; justify-content: flex-end; padding-right: 16px; }
.zoom { width: 55px; background: radial-gradient(circle at 20px 5px, #868686 4.500px, transparent 5px), linear-gradient(#505050, #505050) 0 4px / 100% 2px no-repeat; }

.statusbar { height: 22px; background: #141414; display: flex; justify-content: flex-end; padding-right: 1px; }
.statusbar span { width: 26.300px; border-left: 1px solid #1e1e1e; display: grid; place-items: center; padding: 2px 1px 0 0; }

.taskbar { height: 30px; background: #1d1d1d; color: #fff; display: flex; justify-content: space-between; font-family: "Open Sans", sans-serif; }
.apps { display: flex; gap: 1px; }
.apps span { width: 36px; height: 30px; display: grid; place-items: center; }
.apps .taskview { padding-right: 4px; }
.apps .find, .apps .camera { padding-right: 2px; }
.apps .open { background: linear-gradient(#76b9ed, #76b9ed) center bottom / 28px 2px no-repeat; padding-right: 1px; }
.apps .focused { background: linear-gradient(#76b9ed, #76b9ed) center bottom / 36px 2px no-repeat, #4a4a4a; }
.unity-tile { width: 14px; height: 14px; background: #0d0d0d; display: grid; place-items: center; }
.a-tile { width: 16px; height: 16px; background: #eee; color: #888; display: flex; flex-direction: column; align-items: center; font: 15px/10px "Liberation Sans", sans-serif; letter-spacing: 0; padding-top: 1px; gap: 1px; }
.a-tile b { font-weight: 700; letter-spacing: 0; }
.tray { display: flex; align-items: center; }
.temp { margin-left: 10px; width: 38px; padding-top: 1px; font-size: 14px; letter-spacing: -.4px; }
.cerah { width: 47px; padding-top: 1px; font-size: 14px; letter-spacing: -.5px; }
.meet { margin-left: 12px; }
.drive { margin-left: 8px; }
.mic { margin-left: 10px; }
.battery { margin-left: 12px; }
.wifi { margin-left: 11px; }
.sound { margin-left: 7px; }
.time { margin-left: 10px; width: 45px; letter-spacing: -.6px; }
.desktop-edge { height: 30px; width: 1px; background: #666; margin: 0 7px 0 18px; }
```
